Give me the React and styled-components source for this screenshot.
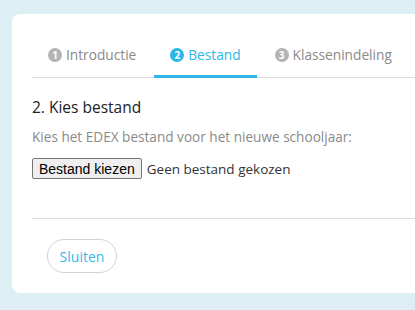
import React from 'react';
import styled, { createGlobalStyle } from 'styled-components';

const Global = createGlobalStyle`
  html, body {
    margin: 0;
    padding: 0;
    background: #deeef5;
    overflow: hidden;
    font-family: "Open Sans", "Noto Sans", sans-serif;
  }
`;

const Page = styled.div`
  height: 310px;
  padding: 14px 0 0 12px;
  box-sizing: border-box;
`;

const Card = styled.div`
  background: #fff;
  border-radius: 8px 0 0 8px;
  width: 420px;
  padding: 23px 0 20px 20px;
  box-sizing: border-box;
`;

const TabBar = styled.div`
  display: flex;
  gap: 2px;
  border-bottom: 1px solid #dcdcdc;
`;

const Tab = styled.div`
  display: flex;
  align-items: center;
  gap: 4px;
  padding: 8px 16px 10px;
  line-height: 20px;
  font-size: 13.7px;
  color: ${(p) => (p.$active ? '#2eb6e6' : '#8a8a8a')};
  border-bottom: 3px solid ${(p) => (p.$active ? '#2eb6e6' : 'transparent')};
  margin-bottom: -1px;
  white-space: nowrap;
`;

const Num = styled.span`
  width: 14px;
  height: 14px;
  border-radius: 50%;
  background: ${(p) => (p.$active ? '#2eb6e6' : '#b4b4b4')};
  color: #fff;
  font-size: 10px;
  font-weight: 700;
  line-height: 14px;
  text-align: center;
`;

const Body = styled.div`
  padding-top: 19px;
`;

const Heading = styled.h2`
  margin: 0;
  font-size: 15.5px;
  font-weight: 400;
  line-height: 20px;
  color: #222;
`;

const Hint = styled.p`
  margin: 10px 0 0;
  font-size: 13.6px;
  line-height: 20px;
  color: #8a8a8a;
`;

const FileRow = styled.div`
  display: flex;
  align-items: center;
  gap: 5px;
  margin-top: 11px;
  height: 21px;
`;

const FileButton = styled.button`
  font-family: "Liberation Sans", Arial, sans-serif;
  font-size: 14px;
  height: 21px;
  padding: 0 6px;
  background: #efefef;
  border: 1px solid #767676;
  border-radius: 2px;
  color: #000;
`;

const FileName = styled.span`
  font-size: 13.5px;
  color: #333;
`;

const Divider = styled.hr`
  border: 0;
  border-top: 1px solid #dcdcdc;
  margin: 39px 0 0;
`;

const Footer = styled.div`
  padding: 20px 0 0 15px;
`;

const Pill = styled.button`
  font-family: inherit;
  font-size: 14px;
  color: #3cb8e8;
  background: #fff;
  border: 1px solid #d3d3d3;
  border-radius: 17px;
  height: 34px;
  width: 70px;
`;

const steps = ['Introductie', 'Bestand', 'Klassenindeling'];

export default function App() {
  return (
    <Page>
      <Global />
      <Card>
        <TabBar>
          {steps.map((s, i) => (
            <Tab key={s} $active={i === 1}>
              <Num $active={i === 1}>{i + 1}</Num>
              {s}
            </Tab>
          ))}
        </TabBar>
        <Body>
          <Heading>2. Kies bestand</Heading>
          <Hint>Kies het EDEX bestand voor het nieuwe schooljaar:</Hint>
          <FileRow>
            <FileButton>Bestand kiezen</FileButton>
            <FileName>Geen bestand gekozen</FileName>
          </FileRow>
        </Body>
        <Divider />
        <Footer>
          <Pill>Sluiten</Pill>
        </Footer>
      </Card>
    </Page>
  );
}
